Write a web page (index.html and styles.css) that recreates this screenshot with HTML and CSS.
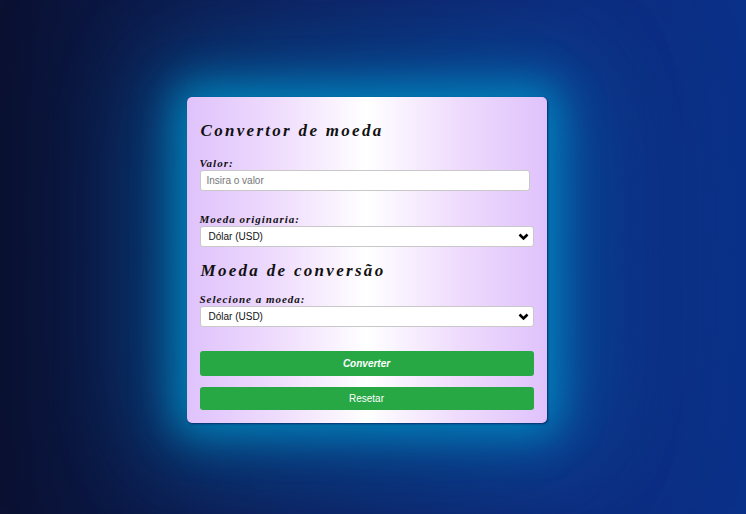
FILE: index.html
```html
<!DOCTYPE html>
<html lang="pt">
<head>
<meta charset="utf-8">
<title>Convertor de moeda</title>
<link rel="stylesheet" href="styles.css">
</head>
<body>
<main class="card">
  <h1 class="title">Convertor de moeda</h1>
  <label class="label" for="valor">Valor:</label>
  <input class="input" id="valor" type="text" placeholder="Insira o valor">

  <label class="label label-gap" for="origem">Moeda originaria:</label>
  <div class="select-wrap">
    <select class="select" id="origem"><option>Dólar (USD)</option></select>
    <svg class="chev" width="11" height="8" viewBox="0 0 11 8"><path d="M1.5 1.5 L5.5 5.5 L9.5 1.5" fill="none" stroke="#000" stroke-width="2.6"/></svg>
  </div>

  <h2 class="title title-2">Moeda de conversão</h2>
  <label class="label label-gap2" for="destino">Selecione a moeda:</label>
  <div class="select-wrap">
    <select class="select" id="destino"><option>Dólar (USD)</option></select>
    <svg class="chev" width="11" height="8" viewBox="0 0 11 8"><path d="M1.5 1.5 L5.5 5.5 L9.5 1.5" fill="none" stroke="#000" stroke-width="2.6"/></svg>
  </div>

  <button class="btn btn-convert" type="button">Converter</button>
  <button class="btn btn-reset" type="button">Resetar</button>
</main>
</body>
</html>
```

FILE: styles.css
```css
* { box-sizing: border-box; }
html, body { height: 100%; }
body {
  margin: 0;
  background: linear-gradient(90deg, #0a1131 0%, #0e1f5e 40%, #0e2a7c 75%, #0a3189 100%);
  display: flex;
  justify-content: center;
  align-items: flex-start;
  padding: 97px 13px 0 0;
  font-family: "Liberation Sans", Arial, sans-serif;
}
.card {
  width: 360px;
  height: 326px;
  border-radius: 5px;
  padding: 23px 13px 0 13px;
  display: flex;
  flex-direction: column;
  align-items: flex-start;
  background: linear-gradient(90deg, #dfc2fc 0%, #efdcfd 25%, #ffffff 50%, #efdcfd 75%, #dfc2fc 100%);
  box-shadow: 1px 1px 2px rgba(10, 30, 90, 0.8), 0 0 40px 12px rgba(0, 150, 200, 0.75), 0 0 90px 35px rgba(0, 130, 200, 0.4), 0 0 160px 60px rgba(0, 100, 180, 0.2);
}
.title {
  margin: 0 0 0 1px;
  font-family: "Liberation Serif", "Times New Roman", serif;
  font-style: italic;
  font-weight: bold;
  font-size: 17px;
  line-height: 22px;
  letter-spacing: 2.3px;
  color: #111;
}
.title-2 { margin-top: 13px; }
.label {
  margin: 15px 0 0 0;
  font-family: "Liberation Serif", "Times New Roman", serif;
  font-style: italic;
  font-weight: bold;
  font-size: 11px;
  line-height: 13px;
  letter-spacing: 1px;
  color: #111;
}
.label-gap { margin-top: 22px; }
.label-gap2 { margin-top: 11px; }
.input {
  margin-top: 0;
  width: 330px;
  height: 21px;
  border: 1px solid #c8c8c8;
  border-radius: 3px;
  background: #fff;
  padding: 0 6px;
  font-family: "Liberation Sans", Arial, sans-serif;
  font-size: 10px;
  color: #333;
}
.input::placeholder { color: #757575; }
.select-wrap {
  position: relative;
  width: 334px;
  margin-top: 0;
}
.select {
  appearance: none;
  -webkit-appearance: none;
  display: block;
  width: 100%;
  height: 21px;
  border: 1px solid #c8c8c8;
  border-radius: 3px;
  background: #fff;
  padding: 0 8px;
  font-family: "Liberation Sans", Arial, sans-serif;
  font-size: 10px;
  color: #111;
}
.chev {
  position: absolute;
  right: 5px;
  top: 7px;
  pointer-events: none;
}
.btn {
  width: 334px;
  border: none;
  border-radius: 3px;
  background: #28a745;
  color: #fff;
  font-size: 10px;
  padding: 0;
}
.btn-convert {
  margin-top: 24px;
  height: 25px;
  font-family: "Liberation Sans", Arial, sans-serif;
  font-style: italic;
  font-weight: bold;
  font-size: 10px;
}
.btn-reset {
  margin-top: 11px;
  height: 23px;
  font-family: "Liberation Sans", Arial, sans-serif;
}
```
